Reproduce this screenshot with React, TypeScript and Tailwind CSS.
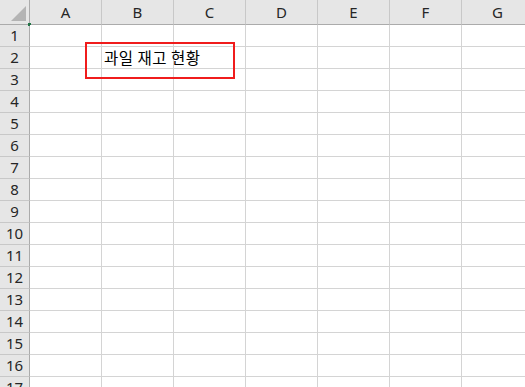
const COLS = ["A", "B", "C", "D", "E", "F", "G"];
const ROWS = Array.from({ length: 17 }, (_, i) => i + 1);

function Cell({ row, col }: { row: number; col: string }) {
  const isTitle = row === 2 && col === "B";
  return (
    <div className="relative flex h-[22px] items-center border-r border-b border-[#d4d4d4] bg-white pl-[2px]">
      {isTitle && (
        <>
          {/* red highlight box drawn over the cells */}
          <div className="absolute left-[-17px] top-[-5px] z-10 h-[37px] w-[150px] border-2 border-[#f01c1c]" />
          <span className="relative z-20 whitespace-nowrap text-[15.5px] tracking-[0.5px] text-black font-['Noto_Sans_CJK_KR',sans-serif]">
            과일 재고 현황
          </span>
        </>
      )}
    </div>
  );
}

export default function App() {
  return (
    <main className="h-[387px] w-[525px] overflow-hidden bg-white font-['Noto_Sans','Liberation_Sans',sans-serif]">
      <div className="grid w-[534px] grid-cols-[30px_repeat(7,72px)]">
        <div className="relative flex h-[25px] items-end justify-end border-r border-b border-[#ababab] bg-[#e6e6e6] pr-[3px] pb-[3px]">
          <svg width="15" height="15" viewBox="0 0 15 15">
            <polygon points="15,0 15,15 0,15" fill="#b4b4b4" />
          </svg>
          <div className="absolute right-[-2px] bottom-[-2px] h-[3px] w-[3px] bg-[#217346]" />
        </div>
        {COLS.map((c) => (
          <div
            key={c}
            className="flex h-[25px] items-center justify-center border-r border-b border-r-[#c8c8c8] border-b-[#ababab] bg-[#e6e6e6] text-[15px] text-[#262626]"
          >
            {c}
          </div>
        ))}
        {ROWS.map((r) => (
          <div key={r} className="contents">
            <div className="flex h-[22px] items-center justify-center border-r border-b border-r-[#ababab] border-b-[#c8c8c8] bg-[#e6e6e6] text-[15px] text-[#262626]">
              {r}
            </div>
            {COLS.map((c) => (
              <Cell key={c} row={r} col={c} />
            ))}
          </div>
        ))}
      </div>
    </main>
  );
}
